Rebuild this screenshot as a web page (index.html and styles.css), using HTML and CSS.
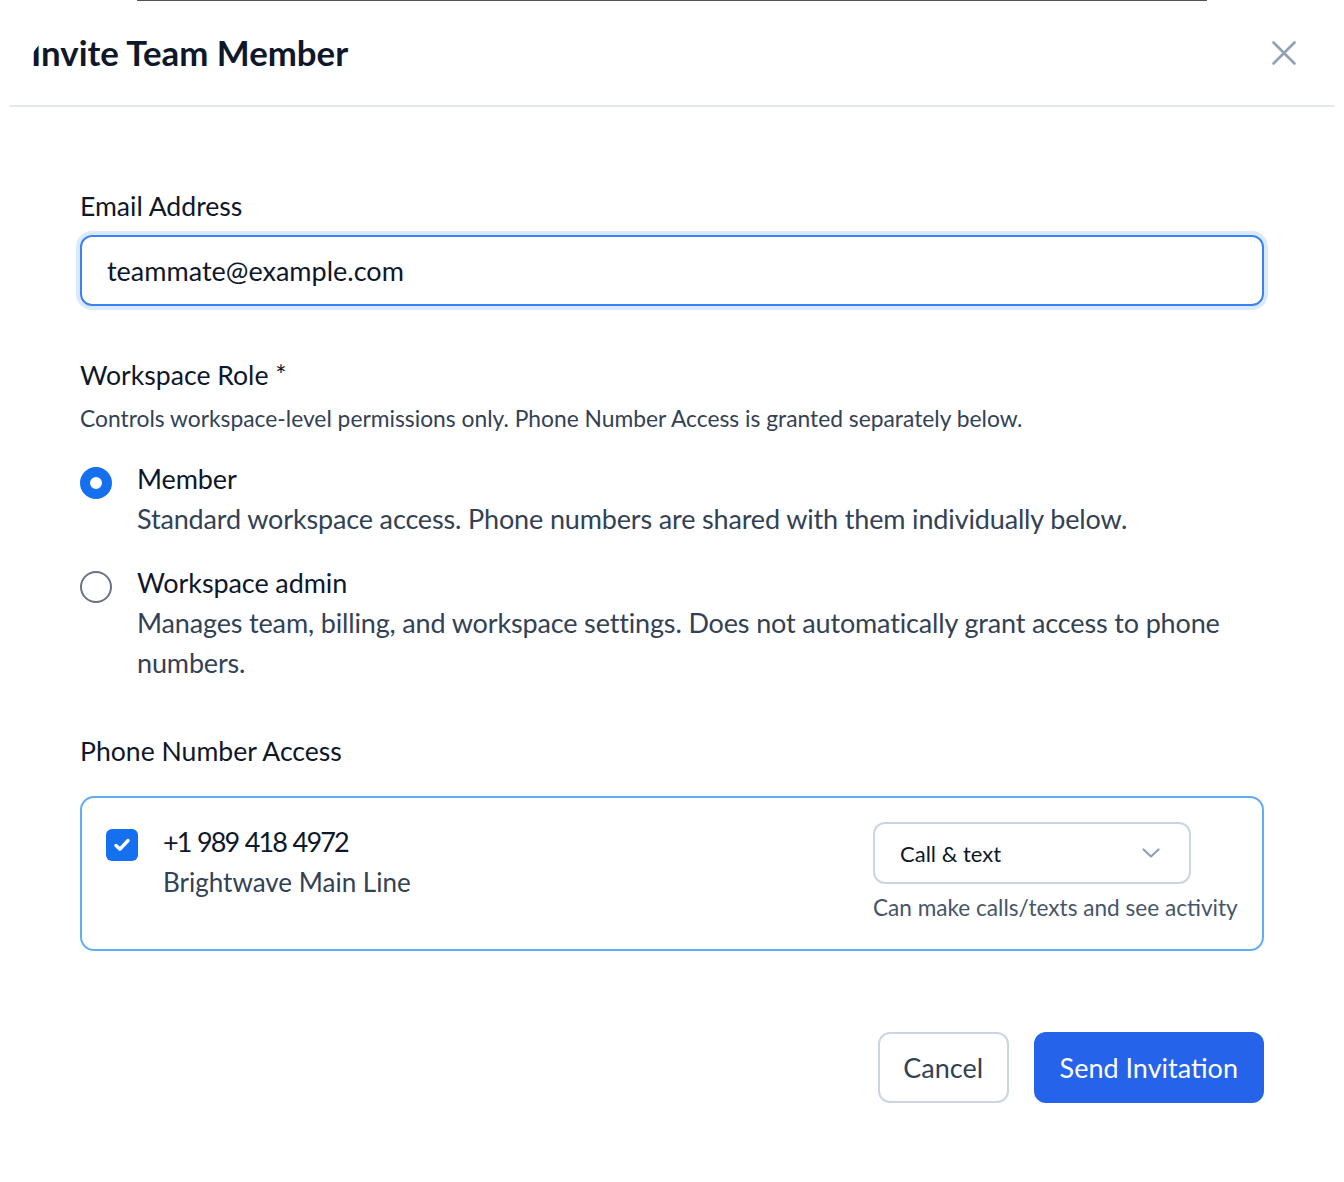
FILE: index.html
```html
<!DOCTYPE html>
<html lang="en">
<head>
<meta charset="utf-8">
<title>Invite Team Member</title>
<link rel="stylesheet" href="styles.css">
</head>
<body>
<div class="modal">
  <div class="modal-topline"></div>
  <header class="modal-header">
    <h2 class="modal-title">Invite Team Member</h2>
    <button class="close-btn" type="button" aria-label="Close">
      <svg width="24" height="24" viewBox="0 0 24 24" fill="none" stroke="#8fa0b8" stroke-width="2.6" stroke-linecap="round"><path d="M1.5 1.5 22.5 22.5M22.5 1.5 1.5 22.5"/></svg>
    </button>
  </header>
  <div class="modal-body">
    <div class="field">
      <label class="field-label" for="email">Email Address</label>
      <div class="input-box"><span class="input-value">teammate@example.com</span></div>
    </div>

    <div class="field role-field">
      <div class="field-label">Workspace Role *</div>
      <p class="field-hint">Controls workspace-level permissions only. Phone Number Access is granted separately below.</p>
      <div class="options">
        <div class="option">
          <span class="radio radio-on"></span>
          <div class="option-text">
            <div class="option-title">Member</div>
            <div class="option-desc">Standard workspace access. Phone numbers are shared with them individually below.</div>
          </div>
        </div>
        <div class="option">
          <span class="radio"></span>
          <div class="option-text">
            <div class="option-title">Workspace admin</div>
            <div class="option-desc">Manages team, billing, and workspace settings. Does not automatically grant access to phone numbers.</div>
          </div>
        </div>
      </div>
    </div>

    <div class="field phone-field">
      <div class="field-label">Phone Number Access</div>
      <div class="phone-card">
        <span class="checkbox">
          <svg width="22" height="22" viewBox="0 0 22 22" fill="none" stroke="#fff" stroke-width="3.4" stroke-linecap="round" stroke-linejoin="round"><path d="M5 11.5 9 15.2 17 6.5"/></svg>
        </span>
        <div class="phone-info">
          <div class="phone-number">+1 989 418 4972</div>
          <div class="phone-name">Brightwave Main Line</div>
        </div>
        <div class="access">
          <div class="select">
            <span class="select-value">Call &amp; text</span>
            <svg width="18" height="10" viewBox="0 0 18 10" fill="none" stroke="#8fa0b8" stroke-width="2.2" stroke-linecap="round" stroke-linejoin="round"><path d="M1.5 1.5 9 8.5 16.5 1.5"/></svg>
          </div>
          <div class="access-hint">Can make calls/texts and see activity</div>
        </div>
      </div>
    </div>

    <div class="actions">
      <button class="btn btn-secondary" type="button">Cancel</button>
      <button class="btn btn-primary" type="button">Send Invitation</button>
    </div>
  </div>
</div>
</body>
</html>
```
FILE: styles.css
```css
* { box-sizing: border-box; }
body {
  margin: 0;
  background: #fff;
  font-family: Lato, "Noto Sans", "Liberation Sans", sans-serif;
  color: #0f172a;
}
.modal {
  margin: 0 7px;
  min-height: 1182px;
  background: #fff;
  border-radius: 131px 131px 0 0;
  overflow: hidden;
}
.modal-topline {
  height: 1px;
  margin: 0 130px;
  background: #555;
}
.modal-header {
  display: flex;
  align-items: center;
  justify-content: space-between;
  height: 106px;
  padding: 0 41px 0 24px;
  border-bottom: 2px solid #e2e8f0;
}
.modal-title {
  margin: 0;
  font-size: 34.8px;
  font-weight: 700;
  line-height: 44px;
  color: #0f172a;
}
.close-btn {
  display: flex;
  padding: 0;
  border: 0;
  background: none;
}
.modal-body {
  padding: 81px 73px 0;
}
.field-label {
  display: block;
  font-size: 26.6px;
  line-height: 36px;
  color: #0f172a;
}
.input-box {
  margin-top: 11px;
  height: 71px;
  display: flex;
  align-items: center;
  padding: 0 25px;
  border: 2px solid #3b82f6;
  border-radius: 12px;
  box-shadow: 0 0 0 4px #dbeafe;
}
.input-value {
  font-size: 27px;
  color: #0f172a;
}
.role-field { margin-top: 51px; }
.field-hint {
  margin: 9px 0 0;
  font-size: 22.8px;
  line-height: 32px;
  color: #334155;
}
.options {
  display: flex;
  flex-direction: column;
  gap: 24px;
  margin-top: 25px;
}
.option {
  display: flex;
  gap: 25px;
}
.radio {
  flex: none;
  width: 32px;
  height: 32px;
  margin-top: 8px;
  border-radius: 50%;
  border: 2px solid #6b7280;
}
.radio-on {
  border: 10px solid #1570ef;
  background: #fff;
}
.option-title {
  font-size: 27px;
  line-height: 40px;
  letter-spacing: -0.1px;
  color: #0f172a;
}
.option-desc {
  font-size: 27px;
  line-height: 40px;
  letter-spacing: -0.15px;
  color: #334155;
}
.phone-field { margin-top: 50px; }
.phone-card {
  margin-top: 27px;
  display: flex;
  align-items: flex-start;
  padding: 24px 24px 25px;
  border: 2px solid #60adf5;
  border-radius: 14px;
}
.checkbox {
  flex: none;
  width: 32px;
  height: 32px;
  margin-top: 7px;
  border-radius: 6px;
  background: #1570ef;
  display: flex;
  align-items: center;
  justify-content: center;
}
.phone-info {
  flex: 1;
  margin-left: 25px;
}
.phone-number {
  font-size: 27px;
  line-height: 40px;
  letter-spacing: -1.9px;
  word-spacing: 1.5px;
  color: #0f172a;
}
.phone-name {
  font-size: 26px;
  line-height: 40px;
  color: #334155;
}
.access { width: 365px; }
.select {
  width: 318px;
  height: 62px;
  display: flex;
  align-items: center;
  justify-content: space-between;
  padding: 0 29px 0 25px;
  border: 2px solid #cbd5e1;
  border-radius: 12px;
}
.select-value {
  font-size: 22px;
  color: #0f172a;
}
.access-hint {
  margin-top: 8px;
  font-size: 22.6px;
  line-height: 32px;
  white-space: nowrap;
  color: #475569;
}
.actions {
  display: flex;
  justify-content: flex-end;
  gap: 25px;
  margin-top: 81px;
}
.btn {
  height: 71px;
  border-radius: 12px;
  font-family: inherit;
  font-size: 27px;
}
.btn-secondary {
  padding: 0 23.5px;
  border: 2px solid #cbd5e1;
  background: #fff;
  color: #334155;
}
.btn-primary {
  border: 0;
  padding: 0 26px;
  background: #2563eb;
  color: #fff;
}
```
